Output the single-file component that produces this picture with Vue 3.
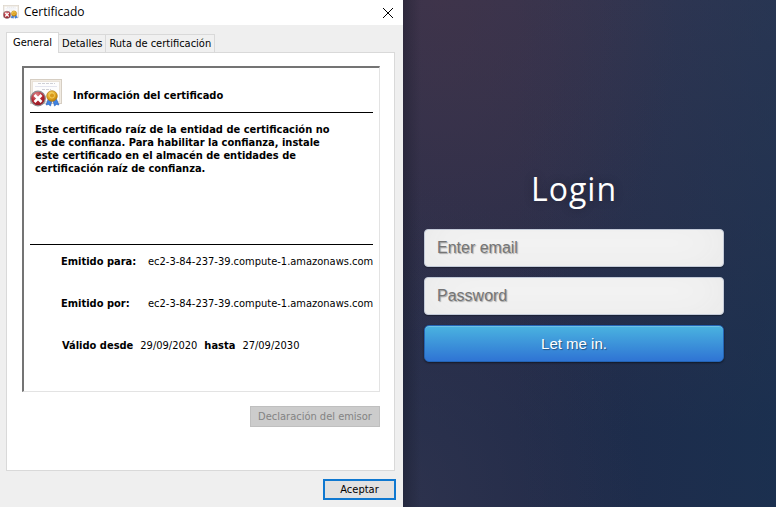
<script setup>
import { ref } from 'vue'

const tabs = ['General', 'Detalles', 'Ruta de certificación']
const active = ref('General')
const host = 'ec2-3-84-237-39.compute-1.amazonaws.com'
const email = ref('')
const password = ref('')
</script>

<template>
  <main class="screen">
    <section class="dialog" aria-labelledby="dialog-title">
      <header class="titlebar">
        <svg class="small-icon" viewBox="0 0 32 32" aria-hidden="true"><use href="#certificate" /></svg>
        <h2 id="dialog-title" class="title">Certificado</h2>
        <button class="close" type="button" aria-label="Cerrar">
          <svg viewBox="0 0 12 12" aria-hidden="true"><path d="M1 1 11 11M11 1 1 11" /></svg>
        </button>
      </header>

      <div class="body">
        <div class="tabs" role="tablist">
          <button
            v-for="tab in tabs"
            :key="tab"
            class="tab"
            :class="{ selected: tab === active }"
            type="button"
            role="tab"
            :aria-selected="tab === active"
            @click="active = tab"
          >{{ tab }}</button>
        </div>

        <div class="panel" role="tabpanel">
          <div class="sheet">
            <div class="heading">
              <svg class="large-icon" viewBox="0 0 32 32" aria-hidden="true">
                <defs>
                  <radialGradient id="red" cx=".4" cy=".25" r=".8">
                    <stop offset="0" stop-color="#e0868a" /><stop offset=".55" stop-color="#b3262f" /><stop offset="1" stop-color="#8c1620" />
                  </radialGradient>
                  <radialGradient id="gold" cx=".4" cy=".3" r=".8">
                    <stop offset="0" stop-color="#f8d868" /><stop offset=".6" stop-color="#dca01c" /><stop offset="1" stop-color="#a86c08" />
                  </radialGradient>
                </defs>
                <g id="certificate">
                  <rect x=".5" y=".5" width="31" height="24" fill="#f1ebe2" stroke="#d6cec3" />
                  <rect x="2.5" y="2.5" width="27" height="20" fill="#fdfdfd" stroke="#ddd3c3" stroke-dasharray="1 1" />
                  <path d="M8 4.500h17M12 10.500h9" stroke="#cfd0d6" stroke-dasharray="3 1" />
                  <path d="M5 7.500h22" stroke="#e3e4ee" />
                  <path d="M18.500 19 16 26l2.500-.5 2 1.500L22.500 20ZM22.500 20l2 7 2-1.500 2.500.5L26 19Z" fill="#3f82e0" stroke="#1c55b0" stroke-width=".5" />
                  <circle cx="22" cy="17" r="5.300" fill="url(#gold)" stroke="#b47a10" stroke-width=".7" />
                  <circle cx="22" cy="16.500" r="2.500" fill="#d99a1c" stroke="#f3d065" stroke-width=".8" />
                  <circle cx="8" cy="19.500" r="7.300" fill="url(#red)" stroke="#8f8c90" stroke-width="1.200" />
                  <path d="m4.500 16 7 7m0-7-7 7" stroke="#fff" stroke-width="2.600" />
                </g>
              </svg>
              <h3 class="sheet-title">Información del certificado</h3>
            </div>

            <p class="warning">Este certificado raíz de la entidad de certificación no es de confianza. Para habilitar la confianza, instale este certificado en el almacén de entidades de certificación raíz de confianza.</p>

            <dl class="facts">
              <div class="fact"><dt>Emitido para:</dt><dd>{{ host }}</dd></div>
              <div class="fact"><dt>Emitido por:</dt><dd>{{ host }}</dd></div>
              <div class="dates">
                <dt>Válido desde</dt><dd>29/09/2020</dd>
                <dt>hasta</dt><dd>27/09/2030</dd>
              </div>
            </dl>
          </div>
          <button class="issuer" type="button" disabled>Declaración del emisor</button>
        </div>

        <button class="accept" type="button">Aceptar</button>
      </div>
    </section>

    <section class="login">
      <h1 class="login-title">Login</h1>
      <form class="form" @submit.prevent>
        <input v-model="email" class="field" type="text" placeholder="Enter email" aria-label="Enter email" />
        <input v-model="password" class="field" type="password" placeholder="Password" aria-label="Password" />
        <button class="submit" type="submit">Let me in.</button>
      </form>
    </section>
  </main>
</template>

<style>
body {
  margin: 0;
}
</style>

<style scoped>
* {
  box-sizing: border-box;
}
.screen {
  display: grid;
  grid-template-columns: minmax(0, 403fr) minmax(0, 373fr);
  min-height: 100vh;
}
h1, h2, h3, p, dl, dd {
  margin: 0;
}
button {
  font: inherit;
  color: inherit;
}
.dialog {
  display: flex;
  flex-direction: column;
  background: #efefef;
  color: #000;
  font: 11px/13px Tahoma, "DejaVu Sans Condensed", sans-serif;
}
.titlebar {
  display: flex;
  align-items: center;
  gap: 5px;
  height: 25px;
  padding: 0 9px 0 3px;
  background: #fff;
}
.small-icon {
  width: 16px;
  height: 16px;
}
.title {
  flex: 1;
  padding-bottom: 2px;
  font: 400 12px/16px "Segoe UI", "Open Sans", sans-serif;
}
.close {
  display: flex;
  padding: 0;
  border: 0;
  background: none;
}
.close svg {
  width: 12px;
  height: 12px;
  fill: none;
  stroke: #000;
}
.body {
  flex: 1;
  display: flex;
  flex-direction: column;
  padding: 7px 7px 7px 6px;
}
.tabs {
  display: flex;
  align-items: flex-end;
}
.tab {
  height: 18px;
  padding: 0 3px;
  border: 1px solid #d9d9d9;
  border-width: 1px 1px 0 0;
  background: #f0f0f0;
  white-space: nowrap;
}
.tab.selected {
  z-index: 1;
  height: 21px;
  margin-bottom: -1px;
  padding: 0 6px 2px;
  border-left-width: 1px;
  background: #fff;
}
.panel {
  flex: 1;
  display: flex;
  flex-direction: column;
  margin-right: 1px;
  padding: 13px 14px 43px 15px;
  border: 1px solid #d9d9d9;
  background: #fff;
}
.sheet {
  flex: 1;
  display: flex;
  flex-direction: column;
  padding: 10px 6px 0;
  border: 1px solid #e3e3e3;
  border-top: 2px solid #747474;
  border-left: 2px solid #747474;
}
.heading {
  display: flex;
  align-items: center;
  gap: 11px;
  height: 35px;
  border-bottom: 1px solid #000;
}
.large-icon {
  width: 32px;
  height: 32px;
}
.sheet-title {
  font-size: 11px;
  line-height: 13px;
}
.warning {
  width: 306px;
  min-height: 131px;
  padding: 10px 0 0 5px;
  font-weight: 700;
}
.facts {
  display: flex;
  flex-direction: column;
  gap: 29px;
  padding-top: 10px;
  border-top: 1px solid #000;
}
.fact {
  display: grid;
  grid-template-columns: 87px 1fr;
  padding-left: 31px;
  white-space: nowrap;
}
.dates {
  display: flex;
  gap: 7px;
  padding-left: 32px;
}
dt {
  font-weight: 700;
}
.issuer {
  align-self: flex-end;
  width: 130px;
  height: 21px;
  margin-top: 14px;
  padding: 0;
  border: 1px solid #bfbfbf;
  background: #ccc;
  color: #838383;
}
.accept {
  align-self: flex-end;
  width: 73px;
  height: 21px;
  margin-top: 8px;
  padding: 0;
  border: 2px solid #0f78d0;
  background: #e1e1e1;
}
.login {
  display: flex;
  flex-direction: column;
  padding: 169px 52px 0 21px;
  background:
    linear-gradient(90deg, rgba(20, 22, 35, .35), rgba(20, 22, 35, 0) 18px),
    radial-gradient(ellipse at 0 100%, rgba(54, 56, 80, .6), transparent 45%),
    radial-gradient(ellipse at 10% 0, rgba(72, 52, 70, .5), transparent 50%),
    linear-gradient(90deg, transparent 30%, rgba(20, 56, 88, .4)),
    linear-gradient(#35344f, #2a2e4a 50%, #1f2a49 85%, #202a49);
}
.login-title {
  color: #fff;
  font: 400 32px/40px "Open Sans", sans-serif;
  letter-spacing: 1px;
  text-align: center;
  text-shadow: 0 0 10px rgba(0, 0, 0, .3);
}
.form {
  display: flex;
  flex-direction: column;
  gap: 10px;
  margin-top: 20px;
}
.field {
  width: 100%;
  height: 38px;
  padding: 0 12px;
  border: 1px solid #c3cad8;
  border-radius: 4px;
  background: #f8f8f8;
  box-shadow: inset 0 -5px 45px rgba(100, 100, 100, .1), 0 1px 1px rgba(0, 0, 0, .3);
  font: 16px/20px "Liberation Sans", Arial, sans-serif;
  text-shadow: 1px 1px 1px rgba(0, 0, 0, .3);
}
.field::placeholder {
  color: #757575;
}
.submit {
  height: 37px;
  padding: 0;
  border: 1px solid #2464b4;
  border-radius: 5px;
  background: linear-gradient(#4ab3e0, #2f74d4);
  box-shadow: inset 0 1px 0 rgba(255, 255, 255, .2), 0 1px 2px rgba(0, 0, 0, .5);
  color: #fff;
  font: 15px/20px "Liberation Sans", Arial, sans-serif;
  text-shadow: 1px 1px 1px rgba(0, 0, 0, .4);
}
</style>
